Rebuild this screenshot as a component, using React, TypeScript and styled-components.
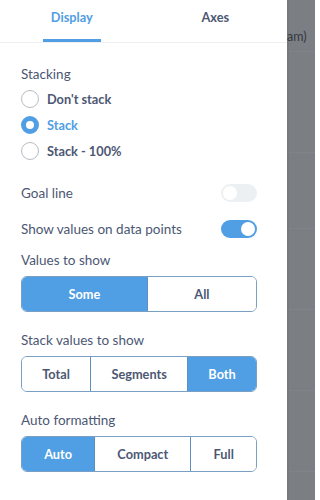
import React, { useState } from "react"
import styled, { createGlobalStyle } from "styled-components"

const GlobalStyle = createGlobalStyle`
  html, body {
    margin: 0;
    padding: 0;
    background: #ffffff;
  }
  body {
    font-family: Lato, "Noto Sans", sans-serif;
    -webkit-font-smoothing: antialiased;
  }
`

const BRAND = "#509ee3"
const TEXT = "#4c5773"

const stackingOptions = ["Don't stack", "Stack", "Stack - 100%"]

export default function App() {
  const [tab, setTab] = useState("Display")
  const [stacking, setStacking] = useState("Stack")
  const [goalLine, setGoalLine] = useState(false)
  const [showValues, setShowValues] = useState(true)
  const [valuesToShow, setValuesToShow] = useState("Some")
  const [stackValues, setStackValues] = useState("Both")
  const [formatting, setFormatting] = useState("Auto")

  return (
    <Page>
      <GlobalStyle />
      <Panel>
        <Tabs>
          {["Display", "Axes"].map((t) => (
            <Tab key={t} onClick={() => setTab(t)}>
              <TabLabel active={t === tab}>{t}</TabLabel>
            </Tab>
          ))}
        </Tabs>
        <Content>
          <Label>Stacking</Label>
          <RadioList>
            {stackingOptions.map((opt) => (
              <RadioRow key={opt} onClick={() => setStacking(opt)}>
                <RadioCircle checked={opt === stacking} />
                <RadioText checked={opt === stacking}>{opt}</RadioText>
              </RadioRow>
            ))}
          </RadioList>

          <ToggleRow gap={17}>
            <RowText>Goal line</RowText>
            <Toggle on={goalLine} onClick={() => setGoalLine(!goalLine)} />
          </ToggleRow>
          <ToggleRow gap={12}>
            <RowText>Show values on data points</RowText>
            <Toggle on={showValues} onClick={() => setShowValues(!showValues)} />
          </ToggleRow>

          <Label gap={9}>Values to show</Label>
          <Segmented
            options={["Some", "All"]}
            value={valuesToShow}
            onChange={setValuesToShow}
          />

          <Label gap={18}>Stack values to show</Label>
          <Segmented
            options={["Total", "Segments", "Both"]}
            value={stackValues}
            onChange={setStackValues}
          />

          <Label gap={18}>Auto formatting</Label>
          <Segmented
            options={["Auto", "Compact", "Full"]}
            value={formatting}
            onChange={setFormatting}
          />
        </Content>
      </Panel>
      <Backdrop>
        <BackdropHeader>
          <BackdropText>am)</BackdropText>
        </BackdropHeader>
        <BackdropRow height={100} />
        <BackdropRow height={75} />
        <BackdropRow height={80} />
        <BackdropRow height={80} />
        <BackdropRow height={80} />
      </Backdrop>
    </Page>
  )
}

function Segmented({
  options,
  value,
  onChange,
}: {
  options: string[]
  value: string
  onChange: (v: string) => void
}) {
  return (
    <SegGroup>
      {options.map((o) => (
        <SegButton key={o} active={o === value} onClick={() => onChange(o)}>
          {o}
        </SegButton>
      ))}
    </SegGroup>
  )
}

const Page = styled.div`
  display: flex;
  width: 315px;
  height: 500px;
  overflow: hidden;
`

const Panel = styled.div`
  width: 287px;
  flex-shrink: 0;
  background: #ffffff;
  display: flex;
  flex-direction: column;
`

const Tabs = styled.div`
  display: flex;
  height: 42px;
  border-bottom: 1px solid #eef0f2;
`

const Tab = styled.div`
  flex: 1;
  display: flex;
  justify-content: center;
  cursor: pointer;
`

const TabLabel = styled.div<{ active?: boolean }>`
  padding: 7px 8px 0;
  height: 32px;
  font-size: 12.75px;
  line-height: 20px;
  font-weight: 700;
  color: ${(p) => (p.active ? BRAND : TEXT)};
  border-bottom: 3px solid ${(p) => (p.active ? BRAND : "transparent")};
  box-sizing: content-box;
`

const Content = styled.div`
  display: flex;
  flex-direction: column;
  padding: 21px 30px 0 21px;
`

const Label = styled.div<{ gap?: number }>`
  margin-top: ${(p) => p.gap ?? 0}px;
  font-size: 13.5px;
  line-height: 20px;
  color: ${TEXT};
`

const RadioList = styled.div`
  display: flex;
  flex-direction: column;
  margin-top: 2px;
`

const RadioRow = styled.div`
  display: flex;
  align-items: center;
  gap: 8px;
  height: 26px;
  cursor: pointer;
`

const RadioCircle = styled.span<{ checked?: boolean }>`
  width: 18px;
  height: 18px;
  box-sizing: border-box;
  border-radius: 50%;
  background: #ffffff;
  border: ${(p) => (p.checked ? `5px solid ${BRAND}` : "1.5px solid #b8bcc2")};
`

const RadioText = styled.span<{ checked?: boolean }>`
  font-size: 12.75px;
  font-weight: 700;
  line-height: 20px;
  color: ${(p) => (p.checked ? BRAND : TEXT)};
`

const ToggleRow = styled.div<{ gap?: number }>`
  display: flex;
  align-items: center;
  justify-content: space-between;
  height: 24px;
  margin-top: ${(p) => p.gap ?? 0}px;
`

const RowText = styled.span`
  font-size: 13.5px;
  line-height: 20px;
  color: ${TEXT};
`

const Toggle = styled.span<{ on?: boolean }>`
  position: relative;
  width: 36px;
  height: 18px;
  border-radius: 9px;
  background: ${(p) => (p.on ? BRAND : "#edf0f2")};
  cursor: pointer;

  &::after {
    content: "";
    position: absolute;
    top: 2px;
    left: ${(p) => (p.on ? "20px" : "2px")};
    width: 14px;
    height: 14px;
    border-radius: 50%;
    background: #ffffff;
  }
`

const SegGroup = styled.div`
  display: flex;
  height: 36px;
  margin-top: 6px;
  border: 1px solid #7a9fc4;
  border-radius: 6px;
  overflow: hidden;
  box-sizing: border-box;
`

const SegButton = styled.div<{ active?: boolean }>`
  flex: 1 1 auto;
  display: flex;
  align-items: center;
  justify-content: center;
  padding: 0 12px;
  font-size: 12.75px;
  font-weight: 700;
  color: ${(p) => (p.active ? "#ffffff" : TEXT)};
  background: ${(p) => (p.active ? BRAND : "#ffffff")};
  cursor: pointer;

  & + & {
    border-left: 1px solid #5f8fbf;
  }
`

const Backdrop = styled.div`
  flex: 1;
  background: #7b7f84;
  border-left: 2px solid #75797e;
  display: flex;
  flex-direction: column;
`

const BackdropHeader = styled.div`
  height: 52px;
  flex-shrink: 0;
  border-bottom: 1px solid #80848a;
  display: flex;
  align-items: flex-end;
  padding-bottom: 6px;
  box-sizing: border-box;
`

const BackdropRow = styled.div<{ height: number }>`
  height: ${(p) => p.height}px;
  flex-shrink: 0;
  border-bottom: 1px solid #80848a;
`

const BackdropText = styled.span`
  margin-left: -2px;
  font-size: 12.5px;
  line-height: 16px;
  color: #34383d;
  white-space: nowrap;
`
